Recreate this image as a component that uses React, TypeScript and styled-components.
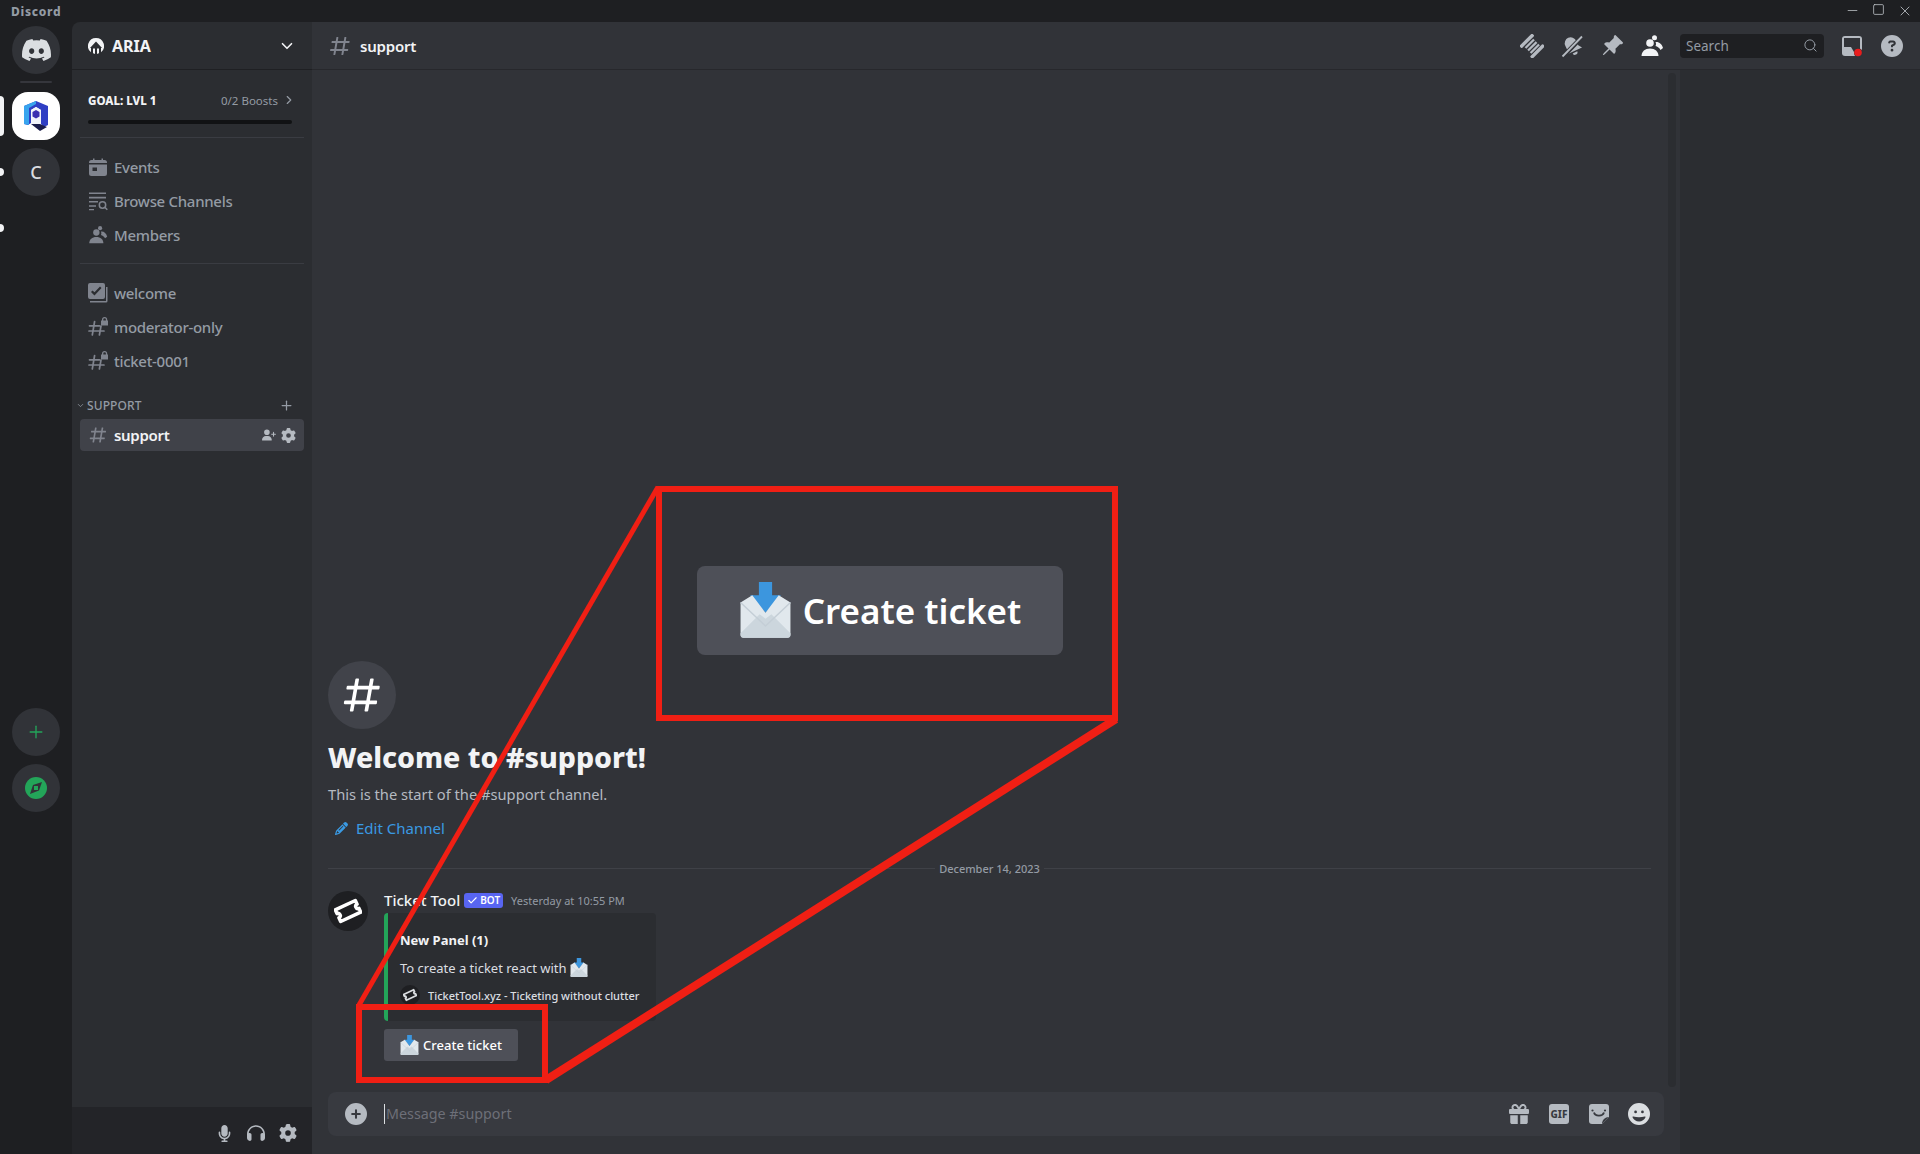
import styled, { createGlobalStyle } from "styled-components";
import type { ReactNode } from "react";
import { ChevronDown, ChevronRight, Check, Plus, Search, X, Minus, Square } from "lucide-react";
import {
  FaCircleQuestion,
  FaGear,
  FaGift,
  FaMicrophone,
  FaHeadphones,
  FaPencil,
  FaCirclePlus,
  FaFaceGrin,
  FaUserPlus,
} from "react-icons/fa6";
import { BsPinAngleFill } from "react-icons/bs";

const GlobalStyle = createGlobalStyle`
  html, body { margin: 0; padding: 0; background: #1e1f22; }
  body { font-family: "Noto Sans", "Open Sans", sans-serif; overflow: hidden; }
  * { box-sizing: border-box; }
`;

const Page = styled.div`
  position: relative;
  width: 1920px;
  height: 1154px;
  display: flex;
  flex-direction: column;
  overflow: hidden;
  background: #1e1f22;
`;
const TitleBar = styled.div`
  height: 22px;
  flex: none;
  display: flex;
  align-items: center;
  justify-content: space-between;
  padding: 0 7px 0 11px;
  background: #1e1f22;
`;
const AppName = styled.span`
  font-size: 12px;
  font-weight: 800;
  letter-spacing: 0.7px;
  color: #949ba4;
`;
const WindowControls = styled.div`
  display: flex;
  gap: 12px;
  color: #c4c9ce;
`;
const Body = styled.div`
  flex: 1;
  display: flex;
  min-height: 0;
`;

const Rail = styled.nav`
  width: 72px;
  flex: none;
  display: flex;
  flex-direction: column;
  align-items: center;
  gap: 8px;
  padding-top: 4px;
`;
const RailItem = styled.div<{ $white?: boolean; $ghost?: boolean; $pushed?: boolean }>`
  position: relative;
  width: 48px;
  height: 48px;
  flex: none;
  display: flex;
  align-items: center;
  justify-content: center;
  border-radius: ${(p) => (p.$white ? "16px" : "50%")};
  background: ${(p) => (p.$ghost ? "transparent" : p.$white ? "#fff" : "#313338")};
  color: #dbdee1;
  font-size: 18px;
  font-weight: 500;
  margin-top: ${(p) => (p.$pushed ? "448px" : "0")};
`;
const RailPill = styled.span<{ $tall?: boolean }>`
  position: absolute;
  left: -12px;
  top: 50%;
  width: 4px;
  height: ${(p) => (p.$tall ? "40px" : "8px")};
  transform: translateY(-50%);
  border-radius: 0 4px 4px 0;
  background: #f2f3f5;
`;
const RailSep = styled.div`
  width: 32px;
  height: 2px;
  border-radius: 1px;
  background: #35363c;
  margin: -1px 0 1px;
`;

const Sidebar = styled.aside`
  width: 240px;
  flex: none;
  display: flex;
  flex-direction: column;
  background: #2b2d31;
  border-top-left-radius: 8px;
`;
const GuildHeader = styled.header`
  height: 48px;
  flex: none;
  display: flex;
  align-items: center;
  padding: 0 16px;
  gap: 8px;
  color: #f2f3f5;
  font-size: 16px;
  font-weight: 700;
  border-bottom: 1px solid #1f2023;
`;
const GuildName = styled.span`
  flex: 1;
`;
const Boost = styled.div`
  height: 68px;
  flex: none;
  margin: 0 8px;
  padding: 21px 8px 0;
  border-bottom: 1px solid #3a3c42;
`;
const BoostRow = styled.div`
  display: flex;
  align-items: center;
  justify-content: space-between;
  height: 18px;
  color: #949ba4;
  font-size: 11.5px;
`;
const BoostGoal = styled.span`
  color: #f2f3f5;
  font-size: 11.5px;
  font-weight: 800;
`;
const BoostCount = styled.span`
  display: flex;
  align-items: center;
  gap: 4px;
`;
const BoostBar = styled.div`
  height: 4px;
  margin: 11px 4px 0 0;
  border-radius: 2px;
  background: #111214;
`;
const ChannelGroup = styled.div<{ $lined?: boolean; $flush?: boolean }>`
  display: flex;
  flex-direction: column;
  gap: 2px;
  margin: 0 8px;
  padding: ${(p) => (p.$flush ? "0" : "13px 0 12px")};
  border-bottom: ${(p) => (p.$lined ? "1px solid #3a3c42" : "0")};
`;
const ChannelRow = styled.div<{ $active?: boolean }>`
  height: 32px;
  display: flex;
  align-items: center;
  padding: 0 8px;
  border-radius: 4px;
  background: ${(p) => (p.$active ? "#404249" : "transparent")};
  color: ${(p) => (p.$active ? "#f2f3f5" : "#949ba4")};
  font-size: 15px;
  letter-spacing: -0.3px;
  font-weight: ${(p) => (p.$active ? 600 : 500)};
`;
const ChannelIcon = styled.span`
  width: 20px;
  height: 20px;
  flex: none;
  display: flex;
  align-items: center;
  justify-content: center;
  margin-right: 6px;
  color: #80848e;
`;
const ChannelName = styled.span`
  flex: 1;
`;
const RowActions = styled.span`
  display: flex;
  align-items: center;
  gap: 5px;
  color: #b5bac1;
`;
const Category = styled.div`
  height: 16px;
  display: flex;
  align-items: center;
  margin: 8px 8px 6px 0;
  padding: 0 10px 0 4px;
  color: #949ba4;
  font-size: 12px;
  font-weight: 500;
  letter-spacing: 0.1px;
  & > span { flex: 1; margin-left: 2px; }
`;
const Spacer = styled.div`
  flex: 1;
`;
const UserPanel = styled.div`
  height: 47px;
  flex: none;
  display: flex;
  align-items: center;
  justify-content: flex-end;
  gap: 12px;
  padding: 5px 14px 0 0;
  background: #232428;
  color: #b5bac1;
`;
const PanelIcon = styled.span`
  width: 20px;
  height: 20px;
  display: flex;
  align-items: center;
  justify-content: center;
`;

const Main = styled.main`
  flex: 1;
  min-width: 0;
  display: flex;
  flex-direction: column;
  background: #313338;
`;
const ChatHeader = styled.header`
  height: 48px;
  flex: none;
  display: flex;
  align-items: center;
  gap: 16px;
  padding: 0 16px;
  border-bottom: 1px solid #27282c;
`;
const ChannelTitle = styled.div`
  flex: 1;
  display: flex;
  align-items: center;
  gap: 8px;
  color: #f2f3f5;
  font-size: 15px;
  letter-spacing: -0.2px;
  font-weight: 600;
  & > svg { color: #80848e; }
`;
const ToolIcon = styled.span<{ $on?: boolean }>`
  width: 24px;
  height: 24px;
  flex: none;
  display: flex;
  align-items: center;
  justify-content: center;
  color: ${(p) => (p.$on ? "#f2f3f5" : "#b5bac1")};
`;
const SearchBox = styled.div`
  width: 144px;
  height: 24px;
  flex: none;
  display: flex;
  align-items: center;
  justify-content: space-between;
  padding: 0 6px 0 6px;
  border-radius: 4px;
  background: #1e1f22;
  color: #949ba4;
  font-size: 13.5px;
`;
const MainRow = styled.div`
  flex: 1;
  min-height: 0;
  display: flex;
`;
const ChatColumn = styled.section`
  flex: 1;
  min-width: 0;
  display: flex;
  flex-direction: column;
`;
const ScrollRow = styled.div`
  flex: 1;
  min-height: 0;
  display: flex;
`;
const Messages = styled.div`
  flex: 1;
  min-width: 0;
  display: flex;
  flex-direction: column;
  justify-content: flex-end;
  padding: 0 17px 31px 16px;
`;
const ScrollTrack = styled.div`
  width: 8px;
  flex: none;
  margin: 3px 4px 5px 0;
  border-radius: 4px;
  background: #2b2d31;
`;
const WelcomeCircle = styled.div`
  width: 68px;
  height: 68px;
  display: flex;
  align-items: center;
  justify-content: center;
  border-radius: 50%;
  background: #41434a;
  color: #fff;
`;
const WelcomeTitle = styled.h1`
  margin: 8px 0 0;
  font-size: 28.5px;
  line-height: 40px;
  font-weight: 800;
  color: #f2f3f5;
`;
const WelcomeSub = styled.p`
  margin: 7px 0 0;
  font-size: 14.7px;
  line-height: 20px;
  color: #b5bac1;
`;
const EditLink = styled.div`
  display: flex;
  align-items: center;
  gap: 8px;
  height: 20px;
  margin: 14px 0 0 7px;
  color: #3a9ae3;
  font-size: 15px;
`;
const DateDivider = styled.div`
  display: flex;
  align-items: center;
  margin: 30px 0 21px;
  height: 1px;
  background: #3f4147;
  justify-content: center;
`;
const DateLabel = styled.span`
  padding: 0 4px;
  background: #313338;
  color: #949ba4;
  font-size: 11px;
  font-weight: 500;
`;
const Message = styled.article`
  display: grid;
  grid-template-columns: 40px 1fr;
  column-gap: 16px;
`;
const Avatar = styled.div`
  width: 40px;
  height: 40px;
  margin-top: 1px;
  display: flex;
  align-items: center;
  justify-content: center;
  border-radius: 50%;
  background: #1e1f22;
`;
const MessageBody = styled.div`
  display: flex;
  flex-direction: column;
  align-items: flex-start;
`;
const MessageHead = styled.div`
  height: 20px;
  display: flex;
  align-items: center;
`;
const Username = styled.span`
  color: #f2f3f5;
  font-size: 15px;
  font-weight: 500;
`;
const BotTag = styled.span`
  display: flex;
  align-items: center;
  gap: 2px;
  height: 15px;
  margin-left: 4px;
  padding: 0 3px;
  border-radius: 3px;
  background: #5865f2;
  color: #fff;
  font-size: 10px;
  font-weight: 600;
`;
const Timestamp = styled.span`
  margin-left: 8px;
  color: #949ba4;
  font-size: 11px;
`;
const Embed = styled.div`
  width: 272px;
  height: 108px;
  margin-top: 3px;
  padding: 18px 12px 0;
  border-left: 4px solid #23a559;
  border-radius: 4px;
  background: #2b2d31;
`;
const EmbedTitle = styled.div`
  color: #f2f3f5;
  font-size: 13px;
  line-height: 18px;
  font-weight: 700;
`;
const EmbedText = styled.div`
  display: flex;
  align-items: center;
  gap: 3px;
  margin-top: 9px;
  color: #dbdee1;
  font-size: 13px;
  line-height: 18px;
`;
const EmbedFooter = styled.div`
  display: flex;
  align-items: center;
  gap: 8px;
  margin-top: 8px;
  height: 20px;
  color: #dbdee1;
  font-size: 11px;
  font-weight: 500;
  white-space: nowrap;
`;
const FooterIcon = styled.span`
  width: 20px;
  height: 20px;
  flex: none;
  display: flex;
  align-items: center;
  justify-content: center;
  border-radius: 50%;
  background: #1e1f22;
`;
const TicketButton = styled.div`
  display: flex;
  align-items: center;
  justify-content: center;
  gap: 4px;
  width: 134px;
  height: 32px;
  margin-top: 8px;
  border-radius: 3px;
  background: #4e5058;
  color: #fff;
  font-size: 13px;
  font-weight: 500;
`;
const Composer = styled.div`
  height: 44px;
  flex: none;
  margin: 0 16px 18px;
  display: flex;
  align-items: center;
  padding: 0 13px 0 16px;
  border-radius: 8px;
  background: #383a40;
  color: #b5bac1;
`;
const Placeholder = styled.span`
  flex: 1;
  height: 20px;
  margin-left: 16px;
  padding-left: 1px;
  border-left: 1px solid #dbdee1;
  color: #6d6f78;
  font-size: 14.3px;
  line-height: 20px;
`;
const ComposerTools = styled.div`
  display: flex;
  gap: 16px;
`;
const GifTile = styled.span`
  width: 20px;
  height: 20px;
  display: flex;
  align-items: center;
  justify-content: center;
  border-radius: 3px;
  background: #b5bac1;
  color: #383a40;
  font-size: 10px;
  font-weight: 800;
`;
const MemberPane = styled.aside`
  width: 240px;
  flex: none;
  background: #2b2d31;
`;

// red call-out drawn on top of the screenshot
const CalloutLines = styled.svg`
  position: absolute;
  inset: 0;
  pointer-events: none;
`;
const ZoomedButton = styled.div`
  position: absolute;
  left: 697px;
  top: 566px;
  width: 366px;
  height: 89px;
  display: flex;
  align-items: center;
  justify-content: center;
  gap: 11px;
  border-radius: 8px;
  background: #4e5058;
  color: #fff;
  font-size: 35px;
  font-weight: 600;
`;

const Hash = ({ size = 20 }: { size?: number }) => (
  <svg width={size} height={size} viewBox="0 0 24 24" fill="currentColor">
    <path fillRule="evenodd" clipRule="evenodd" d="M5.88657 21C5.57547 21 5.3399 20.7189 5.39427 20.4126L6.00001 17H2.59511C2.28449 17 2.04905 16.7198 2.10259 16.4138L2.27759 15.4138C2.31946 15.1746 2.52722 15 2.77011 15H6.35001L7.41001 9H4.00511C3.69449 9 3.45905 8.71977 3.51259 8.41381L3.68759 7.41381C3.72946 7.17456 3.93722 7 4.18011 7H7.76001L8.39677 3.41262C8.43914 3.17391 8.64664 3 8.88907 3H9.87344C10.1845 3 10.4201 3.28107 10.3657 3.58738L9.76001 7H15.76L16.3968 3.41262C16.4391 3.17391 16.6466 3 16.8891 3H17.8734C18.1845 3 18.4201 3.28107 18.3657 3.58738L17.76 7H21.1649C21.4755 7 21.711 7.28023 21.6574 7.58619L21.4824 8.58619C21.4406 8.82544 21.2328 9 20.9899 9H17.41L16.35 15H19.7549C20.0655 15 20.301 15.2802 20.2474 15.5862L20.0724 16.5862C20.0306 16.8254 19.8228 17 19.5799 17H16L15.3632 20.5874C15.3209 20.8261 15.1134 21 14.8709 21H13.8866C13.5755 21 13.3399 20.7189 13.3943 20.4126L14 17H8.00001L7.36325 20.5874C7.32088 20.8261 7.11337 21 6.87094 21H5.88657ZM9.41045 9L8.35045 15H14.3504L15.4104 9H9.41045Z" />
  </svg>
);

const LockedHash = () => (
  <svg width="20" height="20" viewBox="0 0 20 20" fill="currentColor">
    <g stroke="currentColor" strokeWidth="1.7" strokeLinecap="round">
      <path d="M6.6 4.5 4.3 18M13 9l-1.6 9M1.5 8.8h10M1 14h15" />
    </g>
    <path d="M14 2.6a2.6 2.6 0 0 1 5.2 0v1h.8v5h-7v-5h1zm1.3 1h2.6v-1a1.3 1.3 0 0 0-2.6 0z" />
  </svg>
);

const Discord = () => (
  <svg width="29" height="22" viewBox="0 0 127.14 96.36" fill="#dbdee1">
    <path d="M107.7,8.07A105.15,105.15,0,0,0,81.47,0a72.06,72.06,0,0,0-3.36,6.83A97.68,97.68,0,0,0,49,6.83,72.37,72.37,0,0,0,45.64,0,105.89,105.89,0,0,0,19.39,8.09C2.79,32.65-1.71,56.6.54,80.21h0A105.73,105.73,0,0,0,32.71,96.36,77.7,77.7,0,0,0,39.6,85.25a68.42,68.42,0,0,1-10.85-5.18c.91-.66,1.8-1.34,2.66-2a75.57,75.57,0,0,0,64.32,0c.87.71,1.76,1.39,2.66,2a68.68,68.68,0,0,1-10.87,5.19,77,77,0,0,0,6.89,11.1A105.25,105.25,0,0,0,126.6,80.22h0C129.24,52.84,122.09,29.11,107.7,8.07ZM42.45,65.69C36.18,65.69,31,60,31,53s5-12.74,11.43-12.74S54,46,53.89,53,48.84,65.69,42.45,65.69Zm42.24,0C78.41,65.69,73.25,60,73.25,53s5-12.74,11.44-12.74S96.23,46,96.12,53,91.08,65.69,84.69,65.69Z" />
  </svg>
);

const ServerLogo = () => (
  <svg width="24" height="30" viewBox="0 0 24 30">
    <path d="M12 0 24 5v19l-4 2-3-3V9l-5-3-5 3v13l-3 2-4-1V5z" fill="#2f3fc4" />
    <path d="M0 5l12-5v3L5 7v17l-5-1z" fill="#38a4ee" />
    <path d="M7 9l5-3 5 3v14H7z" fill="#f1f3fa" />
    <path d="M12 9l3.500 2v4.500L12 17.500l-3.500-2V11z" fill="#3a2fb0" />
    <path d="M7 23h9l7 3-7 4z" fill="#1a1c4a" />
  </svg>
);

const Envelope = ({ size }: { size: number }) => (
  <svg width={size} height={size * 1.08} viewBox="0 0 36 39">
    <path d="M13.5 0h9v9h6L18 21 7.500 9h6z" fill="#3c96de" />
    <path d="M1 14l8-5 9 12 9-12 8 5v22a2 2 0 0 1-2 2H3a2 2 0 0 1-2-2z" fill="#e1e8ed" />
    <path d="M1 35 14 22l4 3 4-3 13 13v1a2 2 0 0 1-2 2H3a2 2 0 0 1-2-2z" fill="#ccd6dd" />
    <path d="M1 14l17 16 17-16" fill="none" stroke="#c4ced6" strokeWidth="1" />
  </svg>
);

const Ticket = ({ size, color }: { size: number; color: string }) => (
  <svg width={size} height={size} viewBox="0 0 24 24" fill="none" stroke={color} strokeWidth="3">
    <g transform="rotate(-25 12 12)">
      <path d="M2.5 6.500h19v3.500a2 2 0 0 0 0 4v3.500h-19v-3.500a2 2 0 0 0 0-4z" strokeLinejoin="round" />
    </g>
  </svg>
);

const GuildIcon = () => (
  <svg width="16" height="16" viewBox="0 0 16 16" fill="#f2f3f5">
    <path fillRule="evenodd" d="M8 0a8 8 0 0 1 5 14.250V10h1L8 3.500 2 10h1v4.250A8 8 0 0 1 8 0zM5 15.300V10.500h2V15.900A8 8 0 0 1 5 15.300zM9 15.900v-5.400h2v4.800a8 8 0 0 1-2 .6z" />
  </svg>
);

const Threads = () => (
  <svg width="24" height="24" viewBox="0 0 24 24" fill="currentColor">
    <g transform="rotate(-45 12 12)">
      <rect x="3" y="3" width="18" height="3.400" rx="1" />
      <rect x="6" y="7.700" width="12" height="2.300" />
      <rect x="6" y="11.300" width="12" height="2.300" />
      <rect x="6" y="14.800" width="12" height="2.300" />
      <rect x="3" y="18" width="18" height="3.400" rx="1" />
    </g>
  </svg>
);

const BellOff = () => (
  <svg width="24" height="24" viewBox="0 0 24 24" fill="currentColor">
    <g transform="rotate(-25 12 12)">
      <path d="M12 3a6 6 0 0 1 6 6v5l2.500 3.500h-17L6 14V9a6 6 0 0 1 6-6z" />
      <path d="M9.500 19h5a2.500 2.500 0 0 1-5 0z" />
    </g>
    <path d="M3 22.500 22 3" stroke="#313338" strokeWidth="4.500" />
    <path d="M2.500 22.500 22 2.500" stroke="currentColor" strokeWidth="1.800" />
  </svg>
);

const MembersIcon = ({ size = 24 }: { size?: number }) => (
  <svg width={size} height={size} viewBox="0 0 24 24" fill="currentColor">
    <circle cx="10" cy="9" r="3.800" />
    <path d="M1.500 22c0-4.500 3.500-7.500 8.500-7.500s8.500 3 8.500 7.500z" />
    <circle cx="14.500" cy="3.800" r="2.500" />
    <path d="M15.500 8c3.500-.5 6.500 2 7.500 6l-2.500 2c-1-2-3-3.500-5-4 .7-1.500.7-2.700 0-4z" />
  </svg>
);

const CalendarIcon = () => (
  <svg width="20" height="20" viewBox="0 0 20 20" fill="currentColor">
    <path fillRule="evenodd" d="M5 1.500h1.500V3h7V1.500H15V3h1.500A2.500 2.500 0 0 1 19 5.500V6H1v-.5A2.500 2.500 0 0 1 3.500 3H5zM1 7.500h18v9a2.500 2.500 0 0 1-2.500 2.500h-13A2.500 2.500 0 0 1 1 16.500zm3.500 3v3.500H9v-3.500z" />
  </svg>
);

const BrowseIcon = () => (
  <svg width="20" height="20" viewBox="0 0 20 20" fill="currentColor">
    <path d="M1 1.500h17v1.600H1zM1 5.800h17v1.600H1zM1 10h9v1.600H1zM1 14.200h7v1.600H1zM1 18h5v1.200H1z" />
    <circle cx="14.500" cy="14" r="3.200" fill="none" stroke="currentColor" strokeWidth="1.500" />
    <path d="M16.800 16.300l2.500 2.500" stroke="currentColor" strokeWidth="1.600" />
  </svg>
);

const WelcomeIcon = () => (
  <svg width="20" height="20" viewBox="0 0 20 20" fill="currentColor">
    <path fillRule="evenodd" d="M2 0h13a2 2 0 0 1 2 2v12a2 2 0 0 1-2 2H2a2 2 0 0 1-2-2V2a2 2 0 0 1 2-2zm2.500 7.500L3 9l3.500 3.500L13.500 5 12 3.500 6.500 9.300z" />
    <path d="M18 4h1.500v14a1.500 1.500 0 0 1-1.500 1.500H2V18h16z" />
  </svg>
);

const InboxIcon = () => (
  <svg width="24" height="24" viewBox="0 0 24 24">
    <rect x="2" y="2" width="20" height="20" rx="3" fill="#b5bac1" />
    <path d="M4 4h16v14h-6l-3-5H4z" fill="#313338" />
    <circle cx="18.500" cy="19" r="4.500" fill="#313338" />
    <circle cx="18" cy="18.500" r="3.800" fill="#e81d1d" />
  </svg>
);

const Sticker = () => (
  <svg width="24" height="24" viewBox="0 0 24 24">
    <path d="M5 2h14a3 3 0 0 1 3 3v10l-7 7H5a3 3 0 0 1-3-3V5a3 3 0 0 1 3-3z" fill="#b5bac1" />
    <path d="M22 15c-4 0-7 3-7 7z" fill="#383a40" />
    <path d="M7 10.500c1 4 8.500 4.500 10 0" fill="none" stroke="#383a40" strokeWidth="1.800" />
    <circle cx="5.500" cy="8.500" r="1.100" fill="#383a40" />
    <circle cx="18" cy="8.500" r="1.100" fill="#383a40" />
  </svg>
);

const Compass = () => (
  <svg width="22" height="22" viewBox="0 0 22 22">
    <circle cx="11" cy="11" r="11" fill="#23a559" />
    <path d="M17 5l-3 8.500L5 17l3-9z" fill="#313338" />
    <rect x="9" y="9" width="4" height="4" fill="#23a559" />
  </svg>
);

const Icon = ({ children, on }: { children: ReactNode; on?: boolean }) => <ToolIcon $on={on}>{children}</ToolIcon>;

const menuRows = [
  { name: "Events", icon: <CalendarIcon /> },
  { name: "Browse Channels", icon: <BrowseIcon /> },
  { name: "Members", icon: <MembersIcon size={20} /> },
];
const textRows = [
  { name: "welcome", icon: <WelcomeIcon /> },
  { name: "moderator-only", icon: <LockedHash /> },
  { name: "ticket-0001", icon: <LockedHash /> },
];

export default function App() {
  return (
    <Page>
      <GlobalStyle />
      <TitleBar>
        <AppName>Discord</AppName>
        <WindowControls>
          <Minus size={15} strokeWidth={1.2} />
          <Square size={13} strokeWidth={1.4} />
          <X size={16} strokeWidth={1.2} />
        </WindowControls>
      </TitleBar>
      <Body>
        <Rail>
          <RailItem><Discord /></RailItem>
          <RailSep />
          <RailItem $white><RailPill $tall /><ServerLogo /></RailItem>
          <RailItem><RailPill />C</RailItem>
          <RailItem $ghost><RailPill /></RailItem>
          <RailItem $pushed><Plus size={20} color="#23a559" strokeWidth={1.6} /></RailItem>
          <RailItem><Compass /></RailItem>
        </Rail>
        <Sidebar>
          <GuildHeader>
            <GuildIcon />
            <GuildName>ARIA</GuildName>
            <ChevronDown size={18} strokeWidth={2.2} />
          </GuildHeader>
          <Boost>
            <BoostRow>
              <BoostGoal>GOAL: LVL 1</BoostGoal>
              <BoostCount>0/2 Boosts <ChevronRight size={14} /></BoostCount>
            </BoostRow>
            <BoostBar />
          </Boost>
          <ChannelGroup $lined>
            {menuRows.map((r) => (
              <ChannelRow key={r.name}>
                <ChannelIcon>{r.icon}</ChannelIcon>
                <ChannelName>{r.name}</ChannelName>
              </ChannelRow>
            ))}
          </ChannelGroup>
          <ChannelGroup>
            {textRows.map((r) => (
              <ChannelRow key={r.name}>
                <ChannelIcon>{r.icon}</ChannelIcon>
                <ChannelName>{r.name}</ChannelName>
              </ChannelRow>
            ))}
          </ChannelGroup>
          <Category>
            <ChevronDown size={9} strokeWidth={2} />
            <span>SUPPORT</span>
            <Plus size={15} strokeWidth={2} />
          </Category>
          <ChannelGroup $flush>
            <ChannelRow $active>
              <ChannelIcon><Hash /></ChannelIcon>
              <ChannelName>support</ChannelName>
              <RowActions>
                <FaUserPlus size={14} />
                <FaGear size={15} />
              </RowActions>
            </ChannelRow>
          </ChannelGroup>
          <Spacer />
          <UserPanel>
            <PanelIcon><FaMicrophone size={17} /></PanelIcon>
            <PanelIcon><FaHeadphones size={18} /></PanelIcon>
            <PanelIcon><FaGear size={18} /></PanelIcon>
          </UserPanel>
        </Sidebar>
        <Main>
          <ChatHeader>
            <ChannelTitle><Hash size={24} />support</ChannelTitle>
            <Icon><Threads /></Icon>
            <Icon><BellOff /></Icon>
            <Icon><BsPinAngleFill size={23} /></Icon>
            <Icon on><MembersIcon /></Icon>
            <SearchBox>Search<Search size={15} strokeWidth={1.6} /></SearchBox>
            <Icon><InboxIcon /></Icon>
            <Icon><FaCircleQuestion size={22} /></Icon>
          </ChatHeader>
          <MainRow>
            <ChatColumn>
              <ScrollRow>
                <Messages>
                  <WelcomeCircle><Hash size={44} /></WelcomeCircle>
                  <WelcomeTitle>Welcome to #support!</WelcomeTitle>
                  <WelcomeSub>This is the start of the #support channel.</WelcomeSub>
                  <EditLink><FaPencil size={13} />Edit Channel</EditLink>
                  <DateDivider><DateLabel>December 14, 2023</DateLabel></DateDivider>
                  <Message>
                    <Avatar><Ticket size={28} color="#fff" /></Avatar>
                    <MessageBody>
                      <MessageHead>
                        <Username>Ticket Tool</Username>
                        <BotTag><Check size={11} strokeWidth={2.5} />BOT</BotTag>
                        <Timestamp>Yesterday at 10:55 PM</Timestamp>
                      </MessageHead>
                      <Embed>
                        <EmbedTitle>New Panel (1)</EmbedTitle>
                        <EmbedText>To create a ticket react with <Envelope size={18} /></EmbedText>
                        <EmbedFooter>
                          <FooterIcon><Ticket size={14} color="#dbdee1" /></FooterIcon>
                          TicketTool.xyz - Ticketing without clutter
                        </EmbedFooter>
                      </Embed>
                      <TicketButton><Envelope size={19} />Create ticket</TicketButton>
                    </MessageBody>
                  </Message>
                </Messages>
                <ScrollTrack />
              </ScrollRow>
              <Composer>
                <Icon><FaCirclePlus size={22} /></Icon>
                <Placeholder>Message #support</Placeholder>
                <ComposerTools>
                  <Icon><FaGift size={20} /></Icon>
                  <Icon><GifTile>GIF</GifTile></Icon>
                  <Icon><Sticker /></Icon>
                  <Icon><FaFaceGrin size={22} color="#dbdee1" /></Icon>
                </ComposerTools>
              </Composer>
            </ChatColumn>
            <MemberPane />
          </MainRow>
        </Main>
      </Body>
      <CalloutLines width="1920" height="1154" viewBox="0 0 1920 1154" fill="none" stroke="#f01f14">
        <rect x="659" y="489" width="456" height="229" strokeWidth="6" />
        <rect x="359" y="1007" width="186" height="73" strokeWidth="6" />
        <path d="M658 487 359 1005" strokeWidth="5" />
        <path d="M1116 719 546 1080" strokeWidth="8" />
      </CalloutLines>
      <ZoomedButton><Envelope size={53} />Create ticket</ZoomedButton>
    </Page>
  );
}
